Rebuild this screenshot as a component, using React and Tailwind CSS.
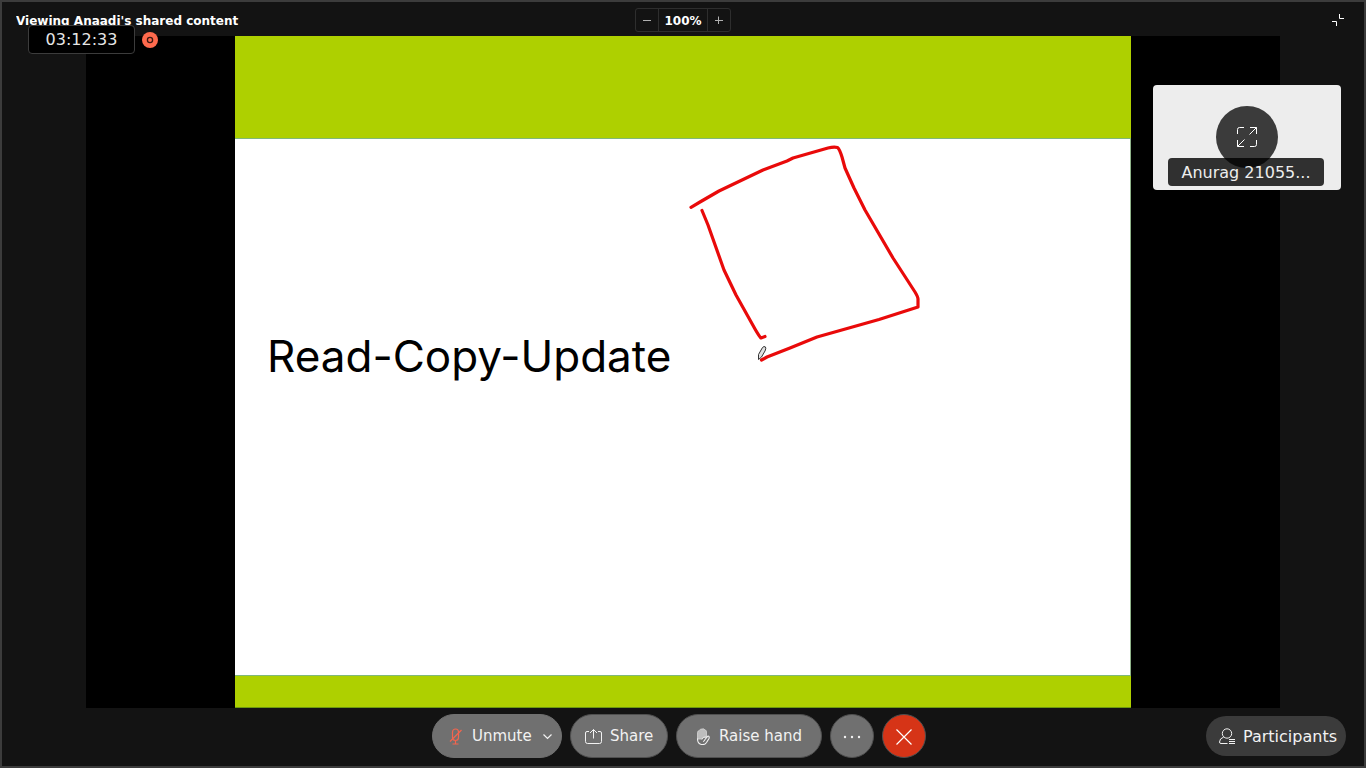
import React from "react";

const pill =
  "flex h-11 items-center rounded-full border border-[#4f4f4f] bg-[#707070] text-[15px] text-[#f2f2f2]";

function Header() {
  return (
    <header className="grid h-[34px] shrink-0 grid-cols-[1fr_auto_1fr] items-center pt-0.5 px-3.5">
      <h1 className="truncate text-xs leading-5 pt-0.5 font-bold text-white">Viewing Anaadi's shared content</h1>
      <div className="flex h-6 w-24 items-stretch rounded-[3px] border border-[#2e2e2e] text-[#b0b0b0]">
        <button aria-label="Zoom out" className="flex flex-1 items-center justify-center">
          <svg width="8" height="8" viewBox="0 0 8 8" stroke="currentColor"><path d="M0 4.5h8" /></svg>
        </button>
        <span className="flex w-[50px] items-center justify-center border-x border-[#2e2e2e] text-xs leading-5 pt-0.5 font-bold text-white">100%</span>
        <button aria-label="Zoom in" className="flex flex-1 items-center justify-center">
          <svg width="8" height="8" viewBox="0 0 8 8" stroke="currentColor"><path d="M0 4.5h8M3.500 .5v8" /></svg>
        </button>
      </div>
      <button aria-label="Exit full screen" className="mr-1.5 justify-self-end text-white">
        <svg width="12" height="12" viewBox="0 0 12 12" fill="none" stroke="currentColor"><path d="M7.5 0v4.5H12M0 7.5h4.5V12" /></svg>
      </button>
    </header>
  );
}

function Slide() {
  return (
    <section className="relative grid aspect-[4/3] h-full grid-rows-[103fr_536fr_33fr] bg-white">
      <div className="border-b border-[#7fb87a] bg-[#aed000]" />
      <div className="border-r border-[#8fb38a] px-8 pt-[189px]">
        <h2 className="whitespace-nowrap font-['Inter',sans-serif] text-[44px] leading-[56px] text-black">Read-Copy-Update</h2>
      </div>
      <div className="border-y border-t-[#7fb87a] border-b-[#6c9a10] bg-[#aed000]" />
      <svg className="absolute inset-0 h-full w-full" viewBox="235 36 896 672" fill="none" aria-hidden="true">
        <g stroke="#e90a0a" strokeWidth="3.2" strokeLinecap="round" strokeLinejoin="round">
          <path d="M691 207.3L700 202L719 191L763 170L787 161L793 158L828 148Q834 146.500 837.500 147.500Q839.500 149 842 157L845 168L854 188L865 210L893 258L915 292Q918 297 918 299V307L879 319.500L817 337L790 348L767 357L761.500 360" />
          <path d="M702 210.500L708 225L724 270L736 295L755 329Q759 336 761 338L765 336.500" />
        </g>
        <path d="M758.500 359.500V354.500L762.500 347.500Q764 345.800 765.500 347Q766.300 348.500 765 351L761.500 357Z" fill="#e0e0e0" stroke="#333" strokeWidth="1" strokeLinejoin="round" />
      </svg>
    </section>
  );
}

function Timer() {
  return (
    <div className="absolute left-[26px] top-[23px] flex items-center gap-[7px]">
      <time className="flex h-[29px] w-[107px] items-center justify-center rounded border border-[#3c3c3c] bg-black text-base text-[#e6e6e6]">03:12:33</time>
      <svg width="16" height="16" viewBox="0 0 16 16" role="img" aria-label="Recording">
        <circle cx="8" cy="8" r="8" fill="#ff6a4d" />
        <circle cx="8" cy="8" r="2.600" fill="none" stroke="#3a1710" strokeWidth="1.300" />
      </svg>
    </div>
  );
}

function ParticipantTile() {
  return (
    <aside className="absolute right-[23px] top-[83px] h-[105px] w-[188px] rounded bg-[#ededed]">
      <button aria-label="Expand video" className="mx-auto mt-[21px] flex size-[62px] items-center justify-center rounded-full bg-[#3b3b3b] text-white">
        <svg width="20" height="20" viewBox="0 0 20 20" fill="none" stroke="currentColor">
          <path d="M.5 7V2.500Q.5.500 2.500.500H7M13 .500H19.500V7M19.500.500L12.500 7.500M19.500 13V17.500Q19.500 19.500 17.500 19.500H13M7 19.500H.5V13M.5 19.500L7.500 12.500" />
        </svg>
      </button>
      <p className="absolute bottom-1 left-[15px] right-[17px] flex h-7 items-center justify-center rounded bg-black/80 pt-0.5 text-base text-[#ededed]">Anurag 21055...</p>
    </aside>
  );
}

function Controls() {
  return (
    <footer className="grid shrink-0 grid-cols-[1fr_auto_1fr] items-center pt-1.5 pr-[18px] pb-2 pl-2.5">
      <div className="col-start-2 flex gap-2">
        <div className={`${pill} w-[130px] border-[#707070]`}>
          <button className="flex h-full flex-1 items-center gap-2 pl-[15px]">
            <svg width="16" height="18" viewBox="0 0 16 18" fill="none" stroke="#f3654e" strokeWidth="1.200">
              <rect x="4.500" y="2" width="6" height="11.500" rx="3" />
              <path d="M13.500 3L2 14.500M7.500 14V17M4.500 17h6" />
            </svg>
            Unmute
          </button>
          <button aria-label="Audio options" className="flex h-full items-center pt-0.5 pl-2 pr-[9px]">
            <svg width="9" height="6" viewBox="0 0 9 6" fill="none" stroke="currentColor" strokeWidth="1.200"><path d="M.5.500L4.500 4.500L8.500.500" /></svg>
          </button>
        </div>
        <button className={`${pill} w-[98px] gap-2 pl-3.5`}>
          <svg width="17" height="16" viewBox="0 0 17 16" fill="none" stroke="currentColor">
            <path d="M4 3.500H2Q.5 3.500.5 5V13.500Q.5 15.500 2.500 15.500H14.500Q16.500 15.500 16.500 13.500V5Q16.500 3.500 15 3.500H13M8.500 10.500V1.500M5 5L8.500 1.500L12 5" />
          </svg>
          Share
        </button>
        <button className={`${pill} w-[146px] gap-2 pl-[18px]`}>
          <svg width="16" height="18" viewBox="0 0 16 18" fill="none" stroke="currentColor">
            <path d="M2.500 12V5.500Q2.500 4 4 3.800Q5 1.700 7 2Q9 1.300 10 3Q11.500 3 11.500 5V10Q8 9.500 7 12Z" fill="#bdbdbd" stroke="#d4d4d4" strokeWidth=".8" />
            <path d="M2.500 11.500C2.500 19 9.500 18.500 11.500 15.500L14 11.500Q14.700 9 13 9L10 12.500Q9.800 14 8 14.500" strokeWidth="1.100" />
            <path d="M11.500 10Q7.500 9.500 7 12.500" strokeWidth=".8" />
          </svg>
          Raise hand
        </button>
        <button aria-label="More options" className={`${pill} w-11 justify-center pt-0.5`}>
          <svg width="18" height="4" viewBox="0 0 18 4" fill="currentColor"><circle cx="2" cy="2" r="1.200" /><circle cx="9" cy="2" r="1.200" /><circle cx="16" cy="2" r="1.200" /></svg>
        </button>
        <button aria-label="Leave meeting" className="flex size-11 items-center justify-center rounded-full border border-[#4f4f4f] bg-[#d63417] pt-0.5 text-white">
          <svg width="16" height="16" viewBox="0 0 16 16" stroke="currentColor" strokeWidth="1.200"><path d="M.5.500L15.500 15.500M15.500.500L.5 15.500" /></svg>
        </button>
      </div>
      <button className="flex h-10 w-[140px] items-center gap-2 justify-self-end rounded-full bg-[#3b3b3b] pl-[13px] pt-px text-base text-[#f2f2f2]">
        <svg width="16" height="17" viewBox="0 0 16 17" fill="none" stroke="currentColor">
          <circle cx="8" cy="5.500" r="4.700" />
          <path d="M4.700 9Q.5 10.500.5 14Q.5 15.500 2 15.500H8.500M10 11.500H16M10 13.500H16M10 15.500H16" />
        </svg>
        Participants
      </button>
    </footer>
  );
}

export default function App() {
  return (
    <main className="relative flex h-screen flex-col overflow-hidden border-2 border-[#3c3c3c] bg-[#131313] font-['DejaVu_Sans',sans-serif]">
      <Header />
      <div className="mx-[84px] flex min-h-0 flex-1 justify-center bg-black">
        <Slide />
      </div>
      <Controls />
      <Timer />
      <ParticipantTile />
    </main>
  );
}
